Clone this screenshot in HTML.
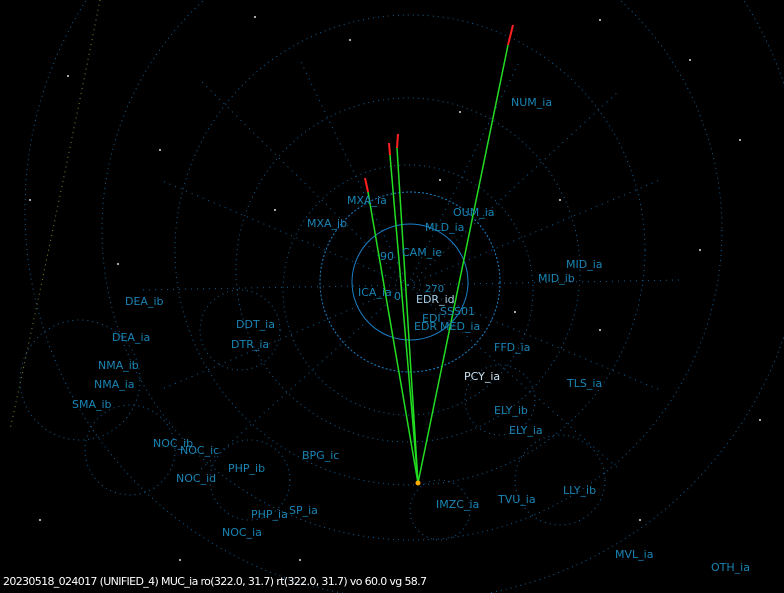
<!DOCTYPE html>
<html><head><style>
html,body{margin:0;padding:0;background:#000;width:784px;height:593px;overflow:hidden}
svg{display:block}
text{font-family:"DejaVu Sans","Liberation Sans",sans-serif;font-size:11px;fill:#1a84b4}
</style></head><body>
<svg width="784" height="593" viewBox="0 0 784 593">
<rect width="784" height="593" fill="#000"/>
<g fill="none" stroke="#1a70b0" stroke-width="1" stroke-dasharray="1 4" opacity="0.85">
<circle cx="408" cy="290" r="125"/>
<circle cx="408" cy="270" r="172"/>
<circle cx="410" cy="250" r="235"/>
<circle cx="412" cy="230" r="310"/>
<circle cx="415" cy="210" r="390"/>
<circle cx="240" cy="330" r="40"/>
<circle cx="130" cy="450" r="45"/>
<circle cx="250" cy="480" r="40"/>
<circle cx="500" cy="400" r="35"/>
<circle cx="560" cy="480" r="45"/>
<circle cx="440" cy="510" r="30"/>
<circle cx="80" cy="380" r="60"/>
</g>
<g fill="none" stroke="#1a70b0" stroke-width="1" stroke-dasharray="1 5" opacity="0.85">
<line x1="408" y1="285" x2="200" y2="80"/><line x1="408" y1="285" x2="620" y2="90"/>
<line x1="408" y1="285" x2="140" y2="290"/><line x1="408" y1="285" x2="680" y2="280"/>
<line x1="408" y1="285" x2="200" y2="470"/><line x1="408" y1="285" x2="620" y2="470"/>
<line x1="408" y1="285" x2="300" y2="60"/><line x1="408" y1="285" x2="520" y2="60"/>
<line x1="408" y1="285" x2="160" y2="180"/><line x1="408" y1="285" x2="660" y2="180"/>
<line x1="408" y1="285" x2="160" y2="390"/><line x1="408" y1="285" x2="660" y2="390"/>
</g>
<g fill="none" stroke="#1a80c8" stroke-width="1">
<circle cx="410" cy="282" r="58"/>
<circle cx="410" cy="282" r="90" stroke-dasharray="2 2"/>
</g>
<path d="M100 0 Q60 200 10 430" stroke="#7a8a30" stroke-width="1" stroke-dasharray="1 4" fill="none"/>
<g stroke="#22dd22" stroke-width="1.5">
<line x1="418" y1="483" x2="508" y2="45"/>
<line x1="418" y1="483" x2="397" y2="148"/>
<line x1="418" y1="483" x2="390" y2="155"/>
<line x1="418" y1="483" x2="368" y2="192"/>
</g>
<g stroke="#ff2020" stroke-width="2">
<line x1="508" y1="45" x2="513" y2="25"/>
<line x1="397" y1="148" x2="398" y2="134"/>
<line x1="390" y1="155" x2="389" y2="143"/>
<line x1="368" y1="192" x2="365" y2="178"/>
</g>
<circle cx="418" cy="483" r="2.5" fill="#ffaa00"/>
<g fill="#ddd">
<circle cx="255" cy="17" r="1"/><circle cx="275" cy="210" r="1"/><circle cx="68" cy="76" r="1"/>
<circle cx="118" cy="264" r="1"/><circle cx="460" cy="112" r="1"/><circle cx="600" cy="330" r="1"/>
<circle cx="700" cy="250" r="1"/><circle cx="740" cy="140" r="1"/><circle cx="690" cy="60" r="1"/>
<circle cx="30" cy="200" r="1"/><circle cx="160" cy="150" r="1"/><circle cx="560" cy="200" r="1"/>
<circle cx="640" cy="520" r="1"/><circle cx="760" cy="420" r="1"/><circle cx="40" cy="520" r="1"/>
<circle cx="350" cy="40" r="1"/><circle cx="600" cy="20" r="1"/><circle cx="300" cy="560" r="1"/>
<circle cx="515" cy="312" r="1"/><circle cx="440" cy="180" r="1"/><circle cx="180" cy="560" r="1"/>
</g>
<text x="511" y="106">NUM_ia</text>
<text x="347" y="204">MXA_ia</text>
<text x="307" y="227">MXA_ib</text>
<text x="453" y="216">OUM_ia</text>
<text x="425" y="231">MLD_ia</text>
<text x="402" y="256">CAM_ie</text>
<text x="380" y="260">90</text>
<text x="566" y="268">MID_ia</text>
<text x="538" y="282">MID_ib</text>
<text x="358" y="296">ICA_ia</text>
<text x="394" y="300">0</text>
<text x="425" y="292" style="font-size:10px">270</text>
<text x="416" y="303" style="fill:#a8d0e8">EDR_id</text>
<text x="440" y="315">SSS01</text>
<text x="422" y="322">EDI</text>
<text x="414" y="330">EDR</text>
<text x="440" y="330">MED_ia</text>
<text x="125" y="305">DEA_ib</text>
<text x="236" y="328">DDT_ia</text>
<text x="112" y="341">DEA_ia</text>
<text x="231" y="348">DTR_ia</text>
<text x="494" y="351">FFD_ia</text>
<text x="98" y="369">NMA_ib</text>
<text x="464" y="380" style="fill:#c8e0f0">PCY_ia</text>
<text x="94" y="388">NMA_ia</text>
<text x="567" y="387">TLS_ia</text>
<text x="72" y="408">SMA_ib</text>
<text x="494" y="414">ELY_ib</text>
<text x="509" y="434">ELY_ia</text>
<text x="153" y="447">NOC_ib</text>
<text x="180" y="454">NOC_ic</text>
<text x="302" y="459">BPG_ic</text>
<text x="228" y="472">PHP_ib</text>
<text x="176" y="482">NOC_id</text>
<text x="563" y="494">LLY_ib</text>
<text x="498" y="503">TVU_ia</text>
<text x="436" y="508">IMZC_ia</text>
<text x="289" y="514">SP_ia</text>
<text x="251" y="518">PHP_ia</text>
<text x="222" y="536">NOC_ia</text>
<text x="615" y="558">MVL_ia</text>
<text x="711" y="571">OTH_ia</text>
<text x="3" y="585" style="fill:#fff;font-size:11px" textLength="424">20230518_024017 (UNIFIED_4) MUC_ia ro(322.0, 31.7) rt(322.0, 31.7) vo 60.0 vg 58.7</text>
</svg>
</body></html>
